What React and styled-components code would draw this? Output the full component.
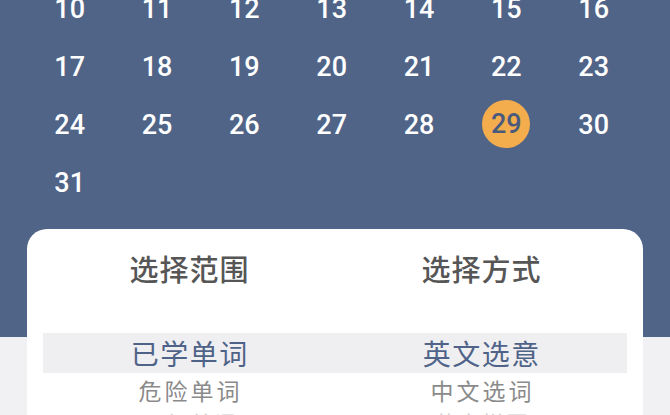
import React from "react";
import styled, { createGlobalStyle } from "styled-components";

const Global = createGlobalStyle`
  html, body { margin: 0; padding: 0; }
  body { width: 670px; height: 415px; overflow: hidden; background: #f1f1f3; }
`;

const Page = styled.div`
  width: 670px;
  height: 415px;
  overflow: hidden;
  background: linear-gradient(to bottom, #506488 0, #506488 337px, #f1f1f3 337px);
  display: flex;
  flex-direction: column;
`;

const CalendarGrid = styled.div`
  display: grid;
  grid-template-columns: repeat(7, 87.33px);
  grid-auto-rows: 58px;
  padding-left: 26px;
  margin-top: -20px;
`;

const Day = styled.div`
  display: flex;
  align-items: center;
  justify-content: center;
  font-family: Roboto, "Liberation Sans", sans-serif;
  font-weight: 500;
  font-size: 27px;
  color: #ffffff;
`;

const Today = styled.span`
  width: 48px;
  height: 48px;
  border-radius: 50%;
  background: #f4ad4c;
  color: #4a5a7c;
  display: flex;
  align-items: center;
  justify-content: center;
  margin-top: -2px;
`;

const Card = styled.div`
  margin: 17px 27px 0;
  flex: 1;
  background: #ffffff;
  border-radius: 20px 20px 0 0;
  padding: 0 16px;
  font-family: "Noto Sans CJK SC", "Noto Sans", sans-serif;
`;

const TitleRow = styled.div`
  display: grid;
  grid-template-columns: 1fr 1fr;
  padding-top: 20px;
`;

const Title = styled.div`
  text-align: center;
  font-size: 29px;
  line-height: 38px;
  font-weight: 500;
  color: #565656;
  letter-spacing: 1px;
  padding-left: 1px;
`;

const Picker = styled.div`
  margin-top: 46px;
  display: flex;
  flex-direction: column;
`;

const PickerRow = styled.div`
  display: grid;
  grid-template-columns: 1fr 1fr;
  align-items: center;
  height: ${(p) => p.$h}px;
  background: ${(p) => (p.$selected ? "#efeff2" : "transparent")};
`;

const Option = styled.div`
  text-align: center;
  font-size: ${(p) => p.$size}px;
  line-height: ${(p) => p.$h}px;
  color: ${(p) => p.$color};
  letter-spacing: ${(p) => p.$ls}px;
  padding-left: ${(p) => p.$ls}px;
`;

const weeks = [
  [10, 11, 12, 13, 14, 15, 16],
  [17, 18, 19, 20, 21, 22, 23],
  [24, 25, 26, 27, 28, 29, 30],
  [31],
];

const rows = [
  { l: "已学单词", r: "英文选意", h: 40, size: 28, color: "#4f6388", ls: 1.5, selected: true },
  { l: "危险单词", r: "中文选词", h: 34, size: 23, color: "#8a8a8a", ls: 3 },
  { l: "四级单词", r: "英文拼写", h: 30, size: 21, color: "#cfcfcf", ls: 3 },
];

export default function App() {
  return (
    <>
      <Global />
      <Page>
        <CalendarGrid>
          {weeks.flat().map((d) => (
            <Day key={d}>{d === 29 ? <Today>{d}</Today> : d}</Day>
          ))}
        </CalendarGrid>
        <Card>
          <TitleRow>
            <Title>选择范围</Title>
            <Title>选择方式</Title>
          </TitleRow>
          <Picker>
            {rows.map((r) => (
              <PickerRow key={r.l} $h={r.h} $selected={r.selected}>
                <Option $size={r.size} $h={r.h} $color={r.color} $ls={r.ls}>{r.l}</Option>
                <Option $size={r.size} $h={r.h} $color={r.color} $ls={r.ls}>{r.r}</Option>
              </PickerRow>
            ))}
          </Picker>
        </Card>
      </Page>
    </>
  );
}
